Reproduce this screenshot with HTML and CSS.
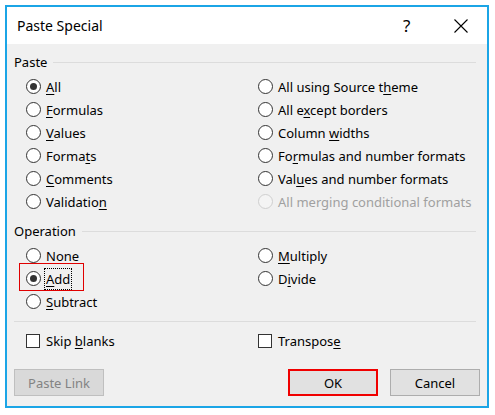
FILE: index.html
```html
<!DOCTYPE html>
<html>
<head>
<meta charset="utf-8">
<link rel="stylesheet" href="styles.css">
</head>
<body>
<div class="dialog">
  <div class="titlebar">
    <span class="title">Paste Special</span>
    <span class="help">?</span>
    <svg class="close" width="14" height="14" viewBox="0 0 14 14"><path d="M0.5 0.5 L13.5 13.5 M13.5 0.5 L0.5 13.5" stroke="#000" stroke-width="1.1" fill="none"/></svg>
  </div>
  <div class="body">
    <div class="group-head"><span class="group-label">Paste</span><span class="group-line"></span></div>
    <div class="grid six">
      <div class="opt"><span class="radio checked"></span><span class="lbl"><u>A</u>ll</span></div>
      <div class="opt"><span class="radio"></span><span class="lbl">All using Source t<u>h</u>eme</span></div>
      <div class="opt"><span class="radio"></span><span class="lbl"><u>F</u>ormulas</span></div>
      <div class="opt"><span class="radio"></span><span class="lbl">All e<u>x</u>cept borders</span></div>
      <div class="opt"><span class="radio"></span><span class="lbl"><u>V</u>alues</span></div>
      <div class="opt"><span class="radio"></span><span class="lbl">Column <u>w</u>idths</span></div>
      <div class="opt"><span class="radio"></span><span class="lbl">Forma<u>t</u>s</span></div>
      <div class="opt"><span class="radio"></span><span class="lbl">Fo<u>r</u>mulas and number formats</span></div>
      <div class="opt"><span class="radio"></span><span class="lbl"><u>C</u>omments</span></div>
      <div class="opt"><span class="radio"></span><span class="lbl">Val<u>u</u>es and number formats</span></div>
      <div class="opt"><span class="radio"></span><span class="lbl">Validatio<u>n</u></span></div>
      <div class="opt disabled"><span class="radio"></span><span class="lbl">All merging conditional formats</span></div>
    </div>
    <div class="group-head op"><span class="group-label">Operation</span><span class="group-line"></span></div>
    <div class="grid three">
      <div class="opt"><span class="radio"></span><span class="lbl">N<u>o</u>ne</span></div>
      <div class="opt"><span class="radio"></span><span class="lbl"><u>M</u>ultiply</span></div>
      <div class="opt marked"><span class="radio checked"></span><span class="lbl focus"><u>A</u>dd</span></div>
      <div class="opt"><span class="radio"></span><span class="lbl">D<u>i</u>vide</span></div>
      <div class="opt"><span class="radio"></span><span class="lbl"><u>S</u>ubtract</span></div>
      <div class="opt"></div>
    </div>
    <div class="sep"></div>
    <div class="grid checks">
      <div class="opt"><span class="check"></span><span class="lbl">Skip <u>b</u>lanks</span></div>
      <div class="opt"><span class="check"></span><span class="lbl">Transpos<u>e</u></span></div>
    </div>
    <div class="buttons">
      <button class="btn disabled-btn">Paste Link</button>
      <span class="spacer"></span>
      <button class="btn ok">OK</button>
      <button class="btn">Cancel</button>
    </div>
  </div>
</div>
</body>
</html>
```
FILE: styles.css
```css
* { box-sizing: border-box; }
html, body { margin: 0; padding: 0; background: #fff; }
body {
  font-family: "Noto Sans", "Open Sans", sans-serif;
  font-size: 13px;
  color: #000;
}
.dialog {
  margin: 5px 0 0 5px;
  width: 484px;
  height: 403px;
  border: 2px solid #1ba5e6;
  background: #f0f0f0;
  display: flex;
  flex-direction: column;
}
.titlebar {
  height: 37px;
  background: #fff;
  display: flex;
  align-items: center;
  padding-left: 10px;
}
.title { font-size: 14px; flex: 1; }
.help { font-size: 17px; width: 10px; margin-right: 41px; }
.close { margin-right: 19px; }
.body {
  flex: 1;
  padding: 8px 7px 9px 7px;
  display: flex;
  flex-direction: column;
}
.group-head {
  height: 20px;
  display: flex;
  align-items: center;
}
.group-head.op { margin-top: 8px; }
.group-label { margin-right: 6px; }
.group-line { flex: 1; height: 1px; background: #dcdcdc; margin-right: 4px; }
.grid {
  display: grid;
  grid-template-columns: 232px 1fr;
  grid-auto-rows: 23px;
  padding-left: 12px;
  margin-top: 3px;
}
.opt {
  display: flex;
  align-items: center;
  position: relative;
}
.radio {
  width: 15px;
  height: 15px;
  border: 1px solid #333;
  border-radius: 50%;
  background: #fff;
  margin-right: 5px;
  display: flex;
  align-items: center;
  justify-content: center;
  flex: none;
}
.radio.checked::after {
  content: "";
  width: 7px;
  height: 7px;
  border-radius: 50%;
  background: #333;
}
.lbl u { text-underline-offset: 2px; }
.disabled .radio { border-color: #cfcfcf; background: #f4f4f4; }
.disabled .lbl { color: #a0a0a0; }
.lbl.focus {
  border: 1px dotted #000;
  padding: 0 1px;
  margin-left: -2px;
  line-height: 20px;
}
.marked::after {
  content: "";
  position: absolute;
  left: -7px;
  top: -4px;
  width: 63px;
  height: 26px;
  border: 1px solid #e00000;
}
.sep {
  height: 1px;
  background: #dcdcdc;
  margin: 8px 4px 0 0;
}
.grid.checks {
  grid-auto-rows: 21px;
  margin-top: 8px;
}
.check {
  width: 14px;
  height: 14px;
  border: 1px solid #333;
  background: #fff;
  margin-right: 6px;
  flex: none;
}
.buttons {
  margin-top: 18px;
  display: flex;
  gap: 12px;
}
.spacer { flex: 1; }
.btn {
  width: 90px;
  height: 27px;
  border: 1px solid #adadad;
  background: #e1e1e1;
  font-family: "Noto Sans", "Open Sans", sans-serif;
  font-size: 13px;
  color: #000;
  padding: 0;
}
.disabled-btn { color: #838383; border-color: #bfbfbf; background: #d9d9d9; }
.ok { border: 2px solid #f00000; }
```
